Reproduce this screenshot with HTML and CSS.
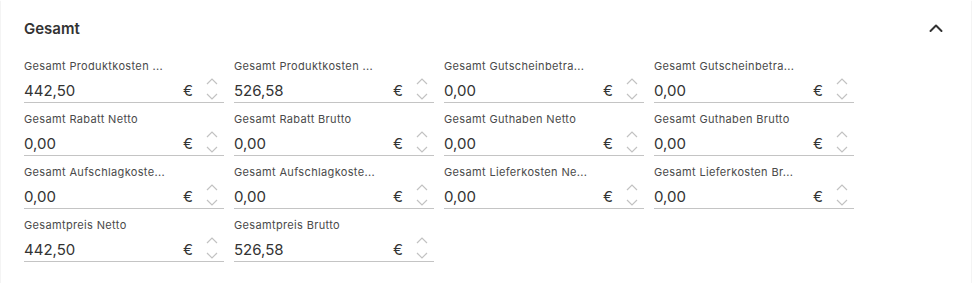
FILE: index.html
```html
<!DOCTYPE html>
<html lang="de">
<head>
<meta charset="utf-8">
<title>Gesamt</title>
<link rel="stylesheet" href="styles.css">
</head>
<body>
<section class="card">
  <header class="card-header">
    <h2 class="card-title">Gesamt</h2>
    <svg class="collapse-icon" width="24" height="24" viewBox="0 0 24 24"><path d="M6.5 14 L12 8.5 L17.5 14" fill="none" stroke="currentColor" stroke-width="2" stroke-linecap="round" stroke-linejoin="round"/></svg>
  </header>
  <div class="grid">
    <div class="field"><div class="label">Gesamt Produktkosten ...</div><div class="input"><span class="value">442,50</span><span class="unit">€</span><svg class="spin" width="12" height="24" viewBox="0 0 12 24"><path d="M1 6 L6 1 L11 6 M1 16 L6 21 L11 16" fill="none" stroke="currentColor" stroke-width="1.2"/></svg></div></div>
    <div class="field"><div class="label">Gesamt Produktkosten ...</div><div class="input"><span class="value">526,58</span><span class="unit">€</span><svg class="spin" width="12" height="24" viewBox="0 0 12 24"><path d="M1 6 L6 1 L11 6 M1 16 L6 21 L11 16" fill="none" stroke="currentColor" stroke-width="1.2"/></svg></div></div>
    <div class="field"><div class="label">Gesamt Gutscheinbetra...</div><div class="input"><span class="value">0,00</span><span class="unit">€</span><svg class="spin" width="12" height="24" viewBox="0 0 12 24"><path d="M1 6 L6 1 L11 6 M1 16 L6 21 L11 16" fill="none" stroke="currentColor" stroke-width="1.2"/></svg></div></div>
    <div class="field"><div class="label">Gesamt Gutscheinbetra...</div><div class="input"><span class="value">0,00</span><span class="unit">€</span><svg class="spin" width="12" height="24" viewBox="0 0 12 24"><path d="M1 6 L6 1 L11 6 M1 16 L6 21 L11 16" fill="none" stroke="currentColor" stroke-width="1.2"/></svg></div></div>

    <div class="field"><div class="label">Gesamt Rabatt Netto</div><div class="input"><span class="value">0,00</span><span class="unit">€</span><svg class="spin" width="12" height="24" viewBox="0 0 12 24"><path d="M1 6 L6 1 L11 6 M1 16 L6 21 L11 16" fill="none" stroke="currentColor" stroke-width="1.2"/></svg></div></div>
    <div class="field"><div class="label">Gesamt Rabatt Brutto</div><div class="input"><span class="value">0,00</span><span class="unit">€</span><svg class="spin" width="12" height="24" viewBox="0 0 12 24"><path d="M1 6 L6 1 L11 6 M1 16 L6 21 L11 16" fill="none" stroke="currentColor" stroke-width="1.2"/></svg></div></div>
    <div class="field"><div class="label">Gesamt Guthaben Netto</div><div class="input"><span class="value">0,00</span><span class="unit">€</span><svg class="spin" width="12" height="24" viewBox="0 0 12 24"><path d="M1 6 L6 1 L11 6 M1 16 L6 21 L11 16" fill="none" stroke="currentColor" stroke-width="1.2"/></svg></div></div>
    <div class="field"><div class="label">Gesamt Guthaben Brutto</div><div class="input"><span class="value">0,00</span><span class="unit">€</span><svg class="spin" width="12" height="24" viewBox="0 0 12 24"><path d="M1 6 L6 1 L11 6 M1 16 L6 21 L11 16" fill="none" stroke="currentColor" stroke-width="1.2"/></svg></div></div>

    <div class="field"><div class="label">Gesamt Aufschlagkoste...</div><div class="input"><span class="value">0,00</span><span class="unit">€</span><svg class="spin" width="12" height="24" viewBox="0 0 12 24"><path d="M1 6 L6 1 L11 6 M1 16 L6 21 L11 16" fill="none" stroke="currentColor" stroke-width="1.2"/></svg></div></div>
    <div class="field"><div class="label">Gesamt Aufschlagkoste...</div><div class="input"><span class="value">0,00</span><span class="unit">€</span><svg class="spin" width="12" height="24" viewBox="0 0 12 24"><path d="M1 6 L6 1 L11 6 M1 16 L6 21 L11 16" fill="none" stroke="currentColor" stroke-width="1.2"/></svg></div></div>
    <div class="field"><div class="label">Gesamt Lieferkosten Ne...</div><div class="input"><span class="value">0,00</span><span class="unit">€</span><svg class="spin" width="12" height="24" viewBox="0 0 12 24"><path d="M1 6 L6 1 L11 6 M1 16 L6 21 L11 16" fill="none" stroke="currentColor" stroke-width="1.2"/></svg></div></div>
    <div class="field"><div class="label">Gesamt Lieferkosten Br...</div><div class="input"><span class="value">0,00</span><span class="unit">€</span><svg class="spin" width="12" height="24" viewBox="0 0 12 24"><path d="M1 6 L6 1 L11 6 M1 16 L6 21 L11 16" fill="none" stroke="currentColor" stroke-width="1.2"/></svg></div></div>

    <div class="field"><div class="label">Gesamtpreis Netto</div><div class="input"><span class="value">442,50</span><span class="unit">€</span><svg class="spin" width="12" height="24" viewBox="0 0 12 24"><path d="M1 6 L6 1 L11 6 M1 16 L6 21 L11 16" fill="none" stroke="currentColor" stroke-width="1.2"/></svg></div></div>
    <div class="field"><div class="label">Gesamtpreis Brutto</div><div class="input"><span class="value">526,58</span><span class="unit">€</span><svg class="spin" width="12" height="24" viewBox="0 0 12 24"><path d="M1 6 L6 1 L11 6 M1 16 L6 21 L11 16" fill="none" stroke="currentColor" stroke-width="1.2"/></svg></div></div>
  </div>
</section>
</body>
</html>
```

FILE: styles.css
```css
html, body {
  margin: 0;
  padding: 0;
  background: #ffffff;
}

body {
  font-family: Inter, "Noto Sans", "Liberation Sans", sans-serif;
  color: #333333;
}

.card {
  box-sizing: border-box;
  height: 283px;
  margin: 0 1px;
  padding: 19px 23px 0 23px;
  background: #ffffff;
  box-shadow: 0 1px 1px rgba(0, 0, 0, 0.25);
}

.card-header {
  display: flex;
  align-items: center;
  justify-content: space-between;
  height: 20px;
}

.card-title {
  margin: 0;
  font-size: 15px;
  line-height: 20px;
  font-weight: 600;
  color: #333333;
}

.collapse-icon {
  color: #333333;
  display: block;
}

.grid {
  margin-top: 20px;
  display: grid;
  grid-template-columns: repeat(4, 200px);
  column-gap: 10px;
  row-gap: 9px;
}

.field {
  display: flex;
  flex-direction: column;
}

.label {
  font-size: 11px;
  line-height: 14px;
  letter-spacing: 0.35px;
  color: #4a4a4a;
  white-space: nowrap;
  overflow: hidden;
}

.input {
  box-sizing: border-box;
  height: 30px;
  padding-top: 5px;
  display: flex;
  align-items: center;
  border-bottom: 1px solid #c4c4c4;
}

.value {
  flex: 1;
  font-size: 15px;
  color: #333333;
}

.unit {
  font-size: 15px;
  color: #333333;
  margin-right: 13px;
}

.spin {
  display: block;
  color: #c2c2c2;
  margin-right: 6px;
}
```
